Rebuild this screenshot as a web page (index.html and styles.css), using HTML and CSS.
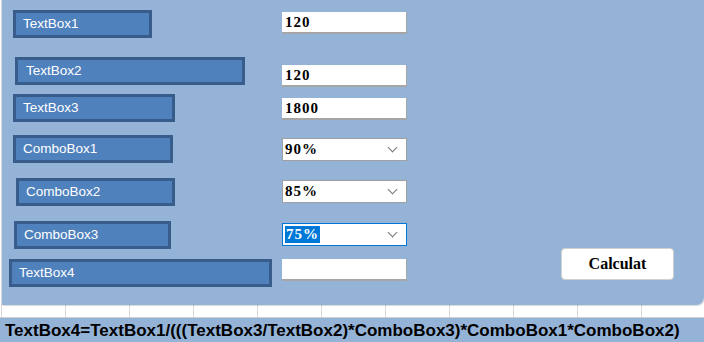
FILE: index.html
```html
<!DOCTYPE html>
<html lang="en">
<head>
    <meta charset="UTF-8">
    <title>Calcul</title>
    <link rel="stylesheet" href="styles.css">
</head>
<body>
    <div class="sheet">
        <div class="form">
            <div class="row row-1">
                <div class="label-cell"><div class="caption cap-1">TextBox1</div></div>
                <div class="field field-1">120</div>
            </div>
            <div class="row row-2">
                <div class="label-cell"><div class="caption cap-2">TextBox2</div></div>
                <div class="field field-2">120</div>
            </div>
            <div class="row row-3">
                <div class="label-cell"><div class="caption cap-3">TextBox3</div></div>
                <div class="field field-3">1800</div>
            </div>
            <div class="row row-4">
                <div class="label-cell"><div class="caption cap-4">ComboBox1</div></div>
                <div class="field combo field-4"><span>90%</span><span class="chev"></span></div>
            </div>
            <div class="row row-5">
                <div class="label-cell"><div class="caption cap-5">ComboBox2</div></div>
                <div class="field combo field-5"><span>85%</span><span class="chev"></span></div>
            </div>
            <div class="row row-6">
                <div class="label-cell"><div class="caption cap-6">ComboBox3</div></div>
                <div class="field combo active field-6"><span class="sel">75%</span><span class="chev"></span></div>
            </div>
            <div class="row row-7">
                <div class="label-cell"><div class="caption cap-7">TextBox4</div></div>
                <div class="field field-7"></div>
                <button class="calc">Calculat</button>
            </div>
        </div>
        <div class="gap"></div>
        <div class="formula">TextBox4=TextBox1/(((TextBox3/TextBox2)*ComboBox3)*ComboBox1*ComboBox2)</div>
    </div>
</body>
</html>
```

FILE: styles.css
```css
body {
    margin: 0;
    background: #ffffff;
}

.sheet {
    width: 704px;
    height: 342px;
    overflow: hidden;
    background: repeating-linear-gradient(to right, #d9d9d9 0, #d9d9d9 1px, #ffffff 1px, #ffffff 64px);
    background-position: 1px 0;
}

.form {
    margin-left: 2px;
    height: 305px;
    padding-top: 10px;
    box-sizing: border-box;
    background: #95b3d7;
    border-bottom-right-radius: 8px;
    box-shadow: 1px 1px 1px rgba(0, 0, 0, 0.15);
}

.row {
    display: flex;
    align-items: flex-start;
    height: 28px;
}

.row-2 { margin-top: 19px; }
.row-3 { margin-top: 9px; }
.row-4 { margin-top: 13px; }
.row-5 { margin-top: 15px; }
.row-6 { margin-top: 15px; }
.row-7 { margin-top: 10px; }

.label-cell {
    width: 280px;
    flex-shrink: 0;
}

.caption {
    height: 28px;
    box-sizing: border-box;
    background: #4f81bd;
    border: 3px solid #385d8a;
    color: #ffffff;
    font-family: "Liberation Sans", Arial, sans-serif;
    font-size: 13.5px;
    line-height: 22px;
    padding-left: 7px;
}

.cap-1 { margin-left: 11px; width: 139px; }
.cap-2 { margin-left: 13px; width: 230px; padding-left: 8px; }
.cap-3 { margin-left: 11px; width: 162px; }
.cap-4 { margin-left: 11px; width: 160px; }
.cap-5 { margin-left: 14px; width: 159px; }
.cap-6 { margin-left: 12px; width: 157px; }
.cap-7 { margin-left: 7px; width: 263px; }

.field {
    width: 125px;
    height: 22px;
    box-sizing: border-box;
    background: #ffffff;
    border-right: 1px solid #a6a6a6;
    border-bottom: 2px solid #a6a6a6;
    font-family: "Liberation Serif", "Times New Roman", serif;
    font-weight: bold;
    font-size: 15px;
    letter-spacing: 1px;
    line-height: 20px;
    padding-left: 3px;
    color: #000000;
}

.field-1 { margin-top: 2px; }
.field-2 { margin-top: 8px; }
.field-3 { margin-top: 4px; }
.field-4 { margin-top: 3px; }
.field-5 { margin-top: 2px; }
.field-6 { margin-top: 2px; }
.field-7 { margin-top: 0; }

.combo {
    display: flex;
    align-items: center;
    justify-content: space-between;
    height: 23px;
    border: 1px solid #a0a0a0;
    padding: 0 10px 0 2px;
    line-height: 21px;
}

.combo.active {
    border: 1px solid #0078d7;
}

.sel {
    background: #0078d7;
    color: #ffffff;
    padding: 0 1px;
    line-height: 17px;
}

.chev {
    width: 6px;
    height: 6px;
    border-right: 1px solid #777777;
    border-bottom: 1px solid #777777;
    transform: rotate(45deg);
    margin-top: -4px;
}

.calc {
    margin-top: -11px;
    margin-left: auto;
    margin-right: 30px;
    width: 113px;
    height: 32px;
    background: #ffffff;
    border: 1px solid #d0d0d0;
    border-radius: 4px;
    font-family: "Liberation Serif", "Times New Roman", serif;
    font-weight: bold;
    font-size: 16px;
    color: #000000;
    padding: 0;
}

.gap {
    height: 12px;
}

.formula {
    height: 25px;
    background: #95b3d7;
    border-top: 1px solid #d0d0d0;
    font-family: "Liberation Sans", Arial, sans-serif;
    font-weight: bold;
    font-size: 17px;
    line-height: 25px;
    padding-left: 5px;
    color: #000000;
    white-space: nowrap;
}
```
